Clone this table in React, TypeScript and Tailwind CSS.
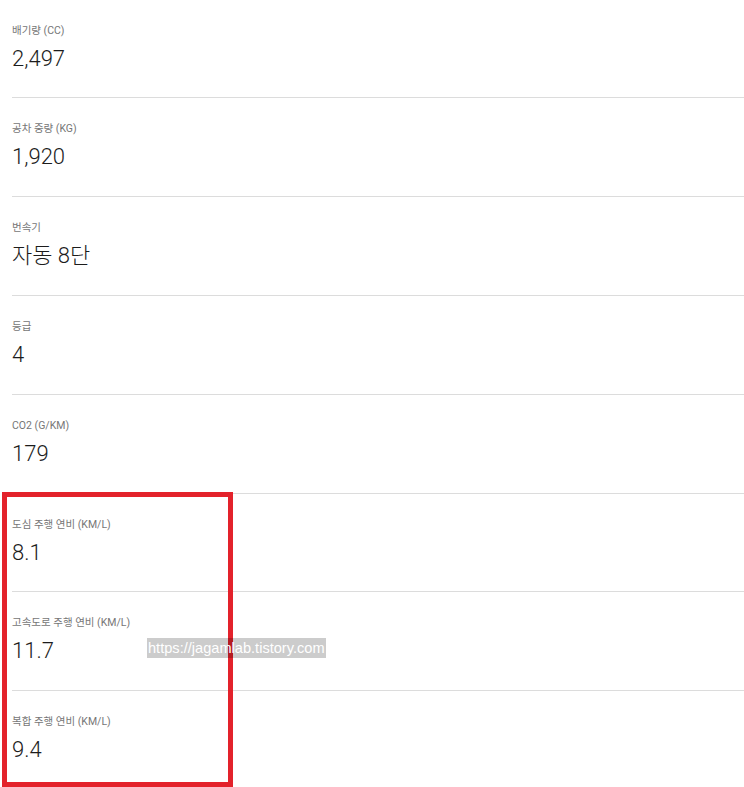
import React from "react";

const rows = [
  { label: "배기량 (CC)", value: "2,497" },
  { label: "공차 중량 (KG)", value: "1,920" },
  { label: "번속기", value: "자동 8단" },
  { label: "등급", value: "4" },
  { label: "CO2 (G/KM)", value: "179" },
  { label: "도심 주행 연비 (KM/L)", value: "8.1" },
  { label: "고속도로 주행 연비 (KM/L)", value: "11.7" },
  { label: "복합 주행 연비 (KM/L)", value: "9.4" },
];

export default function App() {
  return (
    <div
      className="relative w-[744px] h-[787px] overflow-hidden bg-white"
      style={{ fontFamily: 'Roboto, "Noto Sans CJK KR", sans-serif' }}
    >
      <div className="pl-[12px]">
        {rows.map((r, i) => (
          <div
            key={i}
            className={`${i === 0 || i === 5 ? "h-[98px]" : "h-[99px]"} pt-[24px] ${i < rows.length - 1 ? "border-b border-[#dcdcdc]" : ""}`}
          >
            <div className="text-[10.5px] leading-[14px] text-[#767676]">{r.label}</div>
            <div className="mt-[6px] text-[22px] leading-[29px] font-light text-[#1c1c1c]">{r.value}</div>
          </div>
        ))}
      </div>
      <div className="absolute left-[2px] top-[492px] w-[231px] h-[295px] border-[5px] border-[#e3222b]" />
      <div
        className="absolute left-[147px] top-[638px] h-[20px] px-[1px] bg-black/20 text-white text-[14.6px] leading-[20px]"
        style={{ fontFamily: '"Liberation Sans", Arial, sans-serif' }}
      >
        https://jagamlab.tistory.com
      </div>
    </div>
  );
}
